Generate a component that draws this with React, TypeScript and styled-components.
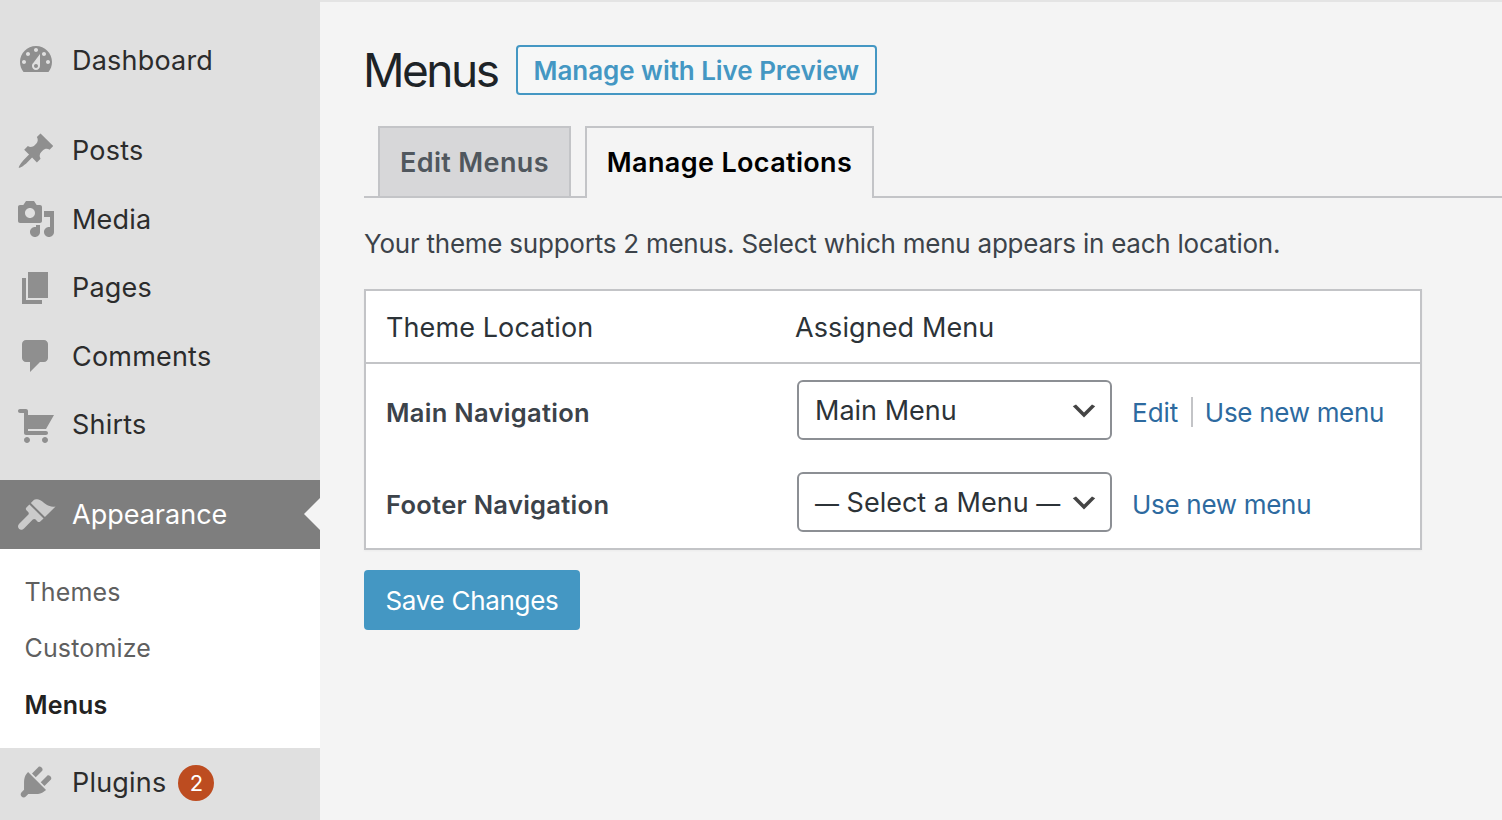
import { createGlobalStyle, styled } from "styled-components";

const GlobalStyle = createGlobalStyle`
  html, body {
    margin: 0;
    padding: 0;
    height: 820px;
    overflow: hidden;
    background: #f4f4f4;
    font-family: Inter, "Liberation Sans", sans-serif;
  }
`;

const Page = styled.div`
  display: flex;
  height: 820px;
  width: 1502px;
  overflow: hidden;
`;

const Sidebar = styled.nav`
  width: 320px;
  flex: none;
  background: #e0e0e0;
  padding-top: 26px;
  box-sizing: border-box;
`;

const MenuGroup = styled.div<{ $gap: number }>`
  margin-top: ${(p) => p.$gap}px;
`;

const MenuRow = styled.a<{ $active?: boolean }>`
  position: relative;
  display: flex;
  align-items: center;
  height: ${(p) => (p.$active ? 69 : 68.5)}px;
  padding-left: 16px;
  color: ${(p) => (p.$active ? "#fff" : "#2c2c2c")};
  background: ${(p) => (p.$active ? "#7e7e7e" : "transparent")};
  font-size: 27px;
  letter-spacing: ${(p) => (p.$active ? 0 : 0.2)}px;

  svg {
    width: 40px;
    height: 40px;
    margin-right: 16px;
    flex: none;
    fill: ${(p) => (p.$active ? "#cbcbcb" : "#8f8f8f")};
    fill-rule: evenodd;
  }

  ${(p) =>
    p.$active &&
    `&::after {
      content: "";
      position: absolute;
      right: 0;
      top: 18px;
      border: 16px solid transparent;
      border-left-width: 0;
      border-right-color: #f4f4f4;
    }`}
`;

const Badge = styled.span`
  display: flex;
  align-items: center;
  justify-content: center;
  width: 36px;
  height: 36px;
  margin: 2px 0 0 12px;
  border-radius: 50%;
  background: #bd4c20;
  color: #fff;
  font-size: 22px;
`;

const SubMenu = styled.div`
  background: #fff;
  padding: 14.5px 0 15px;
`;

const SubItem = styled.a<{ $current?: boolean }>`
  display: flex;
  align-items: center;
  height: 56.5px;
  padding-left: 24.5px;
  font-size: 25px;
  letter-spacing: 0.15px;
  color: ${(p) => (p.$current ? "#222" : "#5f5f5f")};
  font-weight: ${(p) => (p.$current ? 600 : 400)};
`;

const Main = styled.main`
  flex: 1;
  padding: 43px 0 0 44px;
  border-top: 2px solid #e4e4e4;
  color: #2c3338;
  font-size: 26px;
`;

const TitleRow = styled.div`
  display: flex;
  align-items: center;
  gap: 18px;
  height: 50px;
`;

const Title = styled.h1`
  margin: 0 0 0 -1px;
  font-size: 46px;
  font-weight: 400;
  letter-spacing: -2.5px;
  color: #1d2327;
`;

const PreviewButton = styled.a`
  display: flex;
  align-items: center;
  box-sizing: border-box;
  height: 50px;
  padding: 0 16px;
  border: 2px solid #4497c3;
  border-radius: 4px;
  background: #f6f7f7;
  color: #4497c3;
  font-size: 26px;
  font-weight: 600;
  letter-spacing: -0.05px;
`;

const Tabs = styled.div`
  display: flex;
  gap: 14px;
  margin-top: 31px;
  padding-left: 14px;
  height: 70px;
  border-bottom: 2px solid #c3c4c7;
`;

const Tab = styled.a<{ $active?: boolean }>`
  display: flex;
  align-items: center;
  box-sizing: border-box;
  height: ${(p) => (p.$active ? 72 : 70)}px;
  padding: 0 20px ${(p) => (p.$active ? 2 : 0)}px;
  border: 2px solid #c3c4c7;
  border-bottom: 0;
  background: ${(p) => (p.$active ? "#f4f4f4" : "#d7d7d9")};
  color: ${(p) => (p.$active ? "#000" : "#50575e")};
  font-size: 27px;
  font-weight: 600;
  letter-spacing: 0.35px;
`;

const Intro = styled.p`
  margin: 31px 0 0;
  line-height: 30px;
  color: #3c434a;
  letter-spacing: -0.24px;
`;

const LocationTable = styled.div`
  box-sizing: border-box;
  width: 1058px;
  height: 261px;
  margin-top: 30px;
  border: 2px solid #c3c4c7;
  background: #fff;
  box-shadow: 0 1px 2px rgba(0, 0, 0, 0.04);
`;

const HeadRow = styled.div`
  display: grid;
  grid-template-columns: 409px 1fr;
  align-items: center;
  height: 73px;
  box-sizing: border-box;
  padding: 2px 0 0 20px;
  border-bottom: 2px solid #c3c4c7;
  color: #2c3338;
  font-size: 27px;
  letter-spacing: 0.1px;
`;

const Row = styled.div`
  display: grid;
  grid-template-columns: 411px 315px auto;
  align-items: center;
  height: 60px;
  margin-top: 32px;
  padding-left: 20px;

  &:nth-child(2) {
    margin-top: 16px;
  }
`;

const RowLabel = styled.span`
  font-size: 25.5px;
  font-weight: 600;
  letter-spacing: 0.3px;
  color: #3c434a;
  margin-top: 5px;
`;

const SelectBox = styled.div`
  display: flex;
  align-items: center;
  box-sizing: border-box;
  width: 315px;
  height: 60px;
  padding-left: 16px;
  border: 2px solid #8c8f94;
  border-radius: 6px;
  background: #fff;
  color: #2c3338;
  font-size: 27px;
  white-space: pre;

  svg {
    width: 32px;
    height: 32px;
    margin: 2px 10px 0 auto;
    fill: #444;
    flex: none;
  }
`;

const Dash = styled.span`
  font-size: 24px;
`;

const LinkGroup = styled.div`
  display: flex;
  align-items: center;
  margin-left: 20px;
  margin-top: 4px;
`;

const TextLink = styled.a<{ $short?: boolean }>`
  color: #2d6a9f;
  font-size: 26px;
  letter-spacing: ${(p) => (p.$short ? 0 : -0.3)}px;
`;

const Separator = styled.span`
  width: 2px;
  height: 30px;
  margin: 0 12px 0 12.5px;
  background: #c3c4c7;
`;

const SaveButton = styled.button`
  display: block;
  width: 216px;
  height: 60px;
  margin-top: 20px;
  padding: 0;
  border: 0;
  border-radius: 4px;
  background: #4497c3;
  color: #fff;
  font: 400 26px Inter, "Liberation Sans", sans-serif;
  letter-spacing: -0.3px;
`;

const Icon = ({ d }: { d: string }) => (
  <svg viewBox="0 0 20 20" aria-hidden="true">
    <path d={d} />
  </svg>
);

const icons = {
  dashboard:
    "M3.76 16h12.48c1.1-1.37 1.76-3.11 1.76-5 0-4.42-3.58-8-8-8s-8 3.58-8 8c0 1.89.66 3.63 1.76 5zM10 4c.55 0 1 .45 1 1s-.45 1-1 1-1-.45-1-1 .45-1 1-1zM6 6c.55 0 1 .45 1 1s-.45 1-1 1-1-.45-1-1 .45-1 1-1zm8 0c.55 0 1 .45 1 1s-.45 1-1 1-1-.45-1-1 .45-1 1-1zm-5.37 5.55L12 7v6c0 1.1-.9 2-2 2s-2-.9-2-2c0-.57.24-1.08.63-1.45zM4 10c.55 0 1 .45 1 1s-.45 1-1 1-1-.45-1-1 .45-1 1-1zm12 0c.55 0 1 .45 1 1s-.45 1-1 1-1-.45-1-1 .45-1 1-1zm-5 3c0-.55-.45-1-1-1s-1 .45-1 1 .45 1 1 1 1-.45 1-1z",
  posts:
    "M10.44 3.02l1.82-1.82 6.36 6.35-1.83 1.82c-1.05-.68-2.48-.57-3.41.36l-.75.75c-.92.93-1.04 2.35-.35 3.41l-1.83 1.82-2.41-2.41-2.8 2.79c-.42.42-3.38 2.71-3.8 2.29s1.86-3.39 2.28-3.81l2.79-2.79L4.1 9.36l1.83-1.82c1.05.69 2.48.57 3.41-.36l.75-.75c.93-.92 1.04-2.35.35-3.41z",
  media:
    "M13 11V4c0-.55-.45-1-1-1h-1.67L9 1H5L3.67 3H2c-.55 0-1 .45-1 1v7c0 .55.45 1 1 1h10c.55 0 1-.45 1-1zM7 4.5c1.38 0 2.5 1.12 2.5 2.5S8.38 9.5 7 9.5 4.5 8.38 4.5 7 5.62 4.5 7 4.5zM14 6h5v10.5c0 1.38-1.12 2.5-2.5 2.5S14 17.88 14 16.5s1.12-2.5 2.5-2.5c.17 0 .34.02.5.05V9h-3V6zm-4 8.05V13h2v3.5c0 1.38-1.12 2.5-2.5 2.5S7 17.88 7 16.5 8.12 14 9.5 14c.17 0 .34.02.5.05z",
  pages: "M6 15V2h10v13H6zm-1 1h8v2H3V5h2v11z",
  comments:
    "M5 2h9c1.1 0 2 .9 2 2v7c0 1.1-.9 2-2 2h-2l-5 5v-5H5c-1.1 0-2-.9-2-2V4c0-1.1.9-2 2-2z",
  cart:
    "M6 13h9c.55 0 1 .45 1 1s-.45 1-1 1H5c-.55 0-1-.45-1-1V4H2c-.55 0-1-.45-1-1s.45-1 1-1h3c.55 0 1 .45 1 1v2h13l-4 7H6v1zm-.5 3c.83 0 1.5.67 1.5 1.5S6.33 19 5.5 19 4 18.33 4 17.5 4.67 16 5.5 16zm9 0c.83 0 1.5.67 1.5 1.5s-.67 1.5-1.5 1.5-1.5-.67-1.5-1.5.67-1.5 1.5-1.5z",
  appearance:
    "M14.48 11.06L7.41 3.99l1.5-1.5c.5-.56 2.3-.47 3.51.32 1.21.8 1.43 1.28 2.91 2.1 1.18.64 2.45 1.26 4.45.85zM13.77 11.77L6.7 4.7 5.2 6.2c-.39.39-.39 1.02 0 1.41l.9.9c.39.39.39 1.03 0 1.42L1.6 14.4c-.8.8-.8 2 0 2.6.7.6 1.7.4 2.4-.3l4.4-4.4c.39-.39 1.03-.39 1.42 0l.9.9c.39.39 1.02.39 1.41 0z",
  plugins:
    "M13.11 4.36L9.87 7.6 8 5.73l3.24-3.24c.35-.34 1.05-.2 1.56.32.52.51.66 1.21.31 1.55zm-8 1.77l.91-1.12 9.01 9.01-1.19.84c-.71.71-2.63 1.16-3.82 1.16H6.14L4.9 17.26c-.59.59-1.54.59-2.12 0-.59-.58-.59-1.53 0-2.12l1.24-1.24v-3.88c0-1.13.4-3.19 1.09-3.89zm7.26 3.97l3.24-3.24c.34-.35 1.04-.21 1.55.31.52.51.66 1.21.31 1.55l-3.24 3.25z",
  chevron: "M5 6l5 5 5-5 2 1-7 7-7-7 2-1z",
};

const App = () => {
  return (
    <>
      <GlobalStyle />
      <Page>
        <Sidebar>
          <MenuRow>
            <Icon d={icons.dashboard} />
            Dashboard
          </MenuRow>
          <MenuGroup $gap={22}>
            <MenuRow>
              <Icon d={icons.posts} />
              Posts
            </MenuRow>
            <MenuRow>
              <Icon d={icons.media} />
              Media
            </MenuRow>
            <MenuRow>
              <Icon d={icons.pages} />
              Pages
            </MenuRow>
            <MenuRow>
              <Icon d={icons.comments} />
              Comments
            </MenuRow>
            <MenuRow>
              <Icon d={icons.cart} />
              Shirts
            </MenuRow>
          </MenuGroup>
          <MenuGroup $gap={21}>
            <MenuRow $active>
              <Icon d={icons.appearance} />
              Appearance
            </MenuRow>
            <SubMenu>
              <SubItem>Themes</SubItem>
              <SubItem>Customize</SubItem>
              <SubItem $current>Menus</SubItem>
            </SubMenu>
            <MenuRow>
              <Icon d={icons.plugins} />
              Plugins
              <Badge>2</Badge>
            </MenuRow>
          </MenuGroup>
        </Sidebar>
        <Main>
          <TitleRow>
            <Title>Menus</Title>
            <PreviewButton>Manage with Live Preview</PreviewButton>
          </TitleRow>
          <Tabs>
            <Tab>Edit Menus</Tab>
            <Tab $active>Manage Locations</Tab>
          </Tabs>
          <Intro>
            Your theme supports 2 menus. Select which menu appears in each location.
          </Intro>
          <LocationTable>
            <HeadRow>
              <span>Theme Location</span>
              <span>Assigned Menu</span>
            </HeadRow>
            <Row>
              <RowLabel>Main Navigation</RowLabel>
              <SelectBox>
                Main Menu
                <Icon d={icons.chevron} />
              </SelectBox>
              <LinkGroup>
                <TextLink $short>Edit</TextLink>
                <Separator />
                <TextLink>Use new menu</TextLink>
              </LinkGroup>
            </Row>
            <Row>
              <RowLabel>Footer Navigation</RowLabel>
              <SelectBox>
                <span>
                  <Dash>—</Dash> Select a Menu <Dash>—</Dash>
                </span>
                <Icon d={icons.chevron} />
              </SelectBox>
              <LinkGroup>
                <TextLink>Use new menu</TextLink>
              </LinkGroup>
            </Row>
          </LocationTable>
          <SaveButton>Save Changes</SaveButton>
        </Main>
      </Page>
    </>
  );
};

export default App;
